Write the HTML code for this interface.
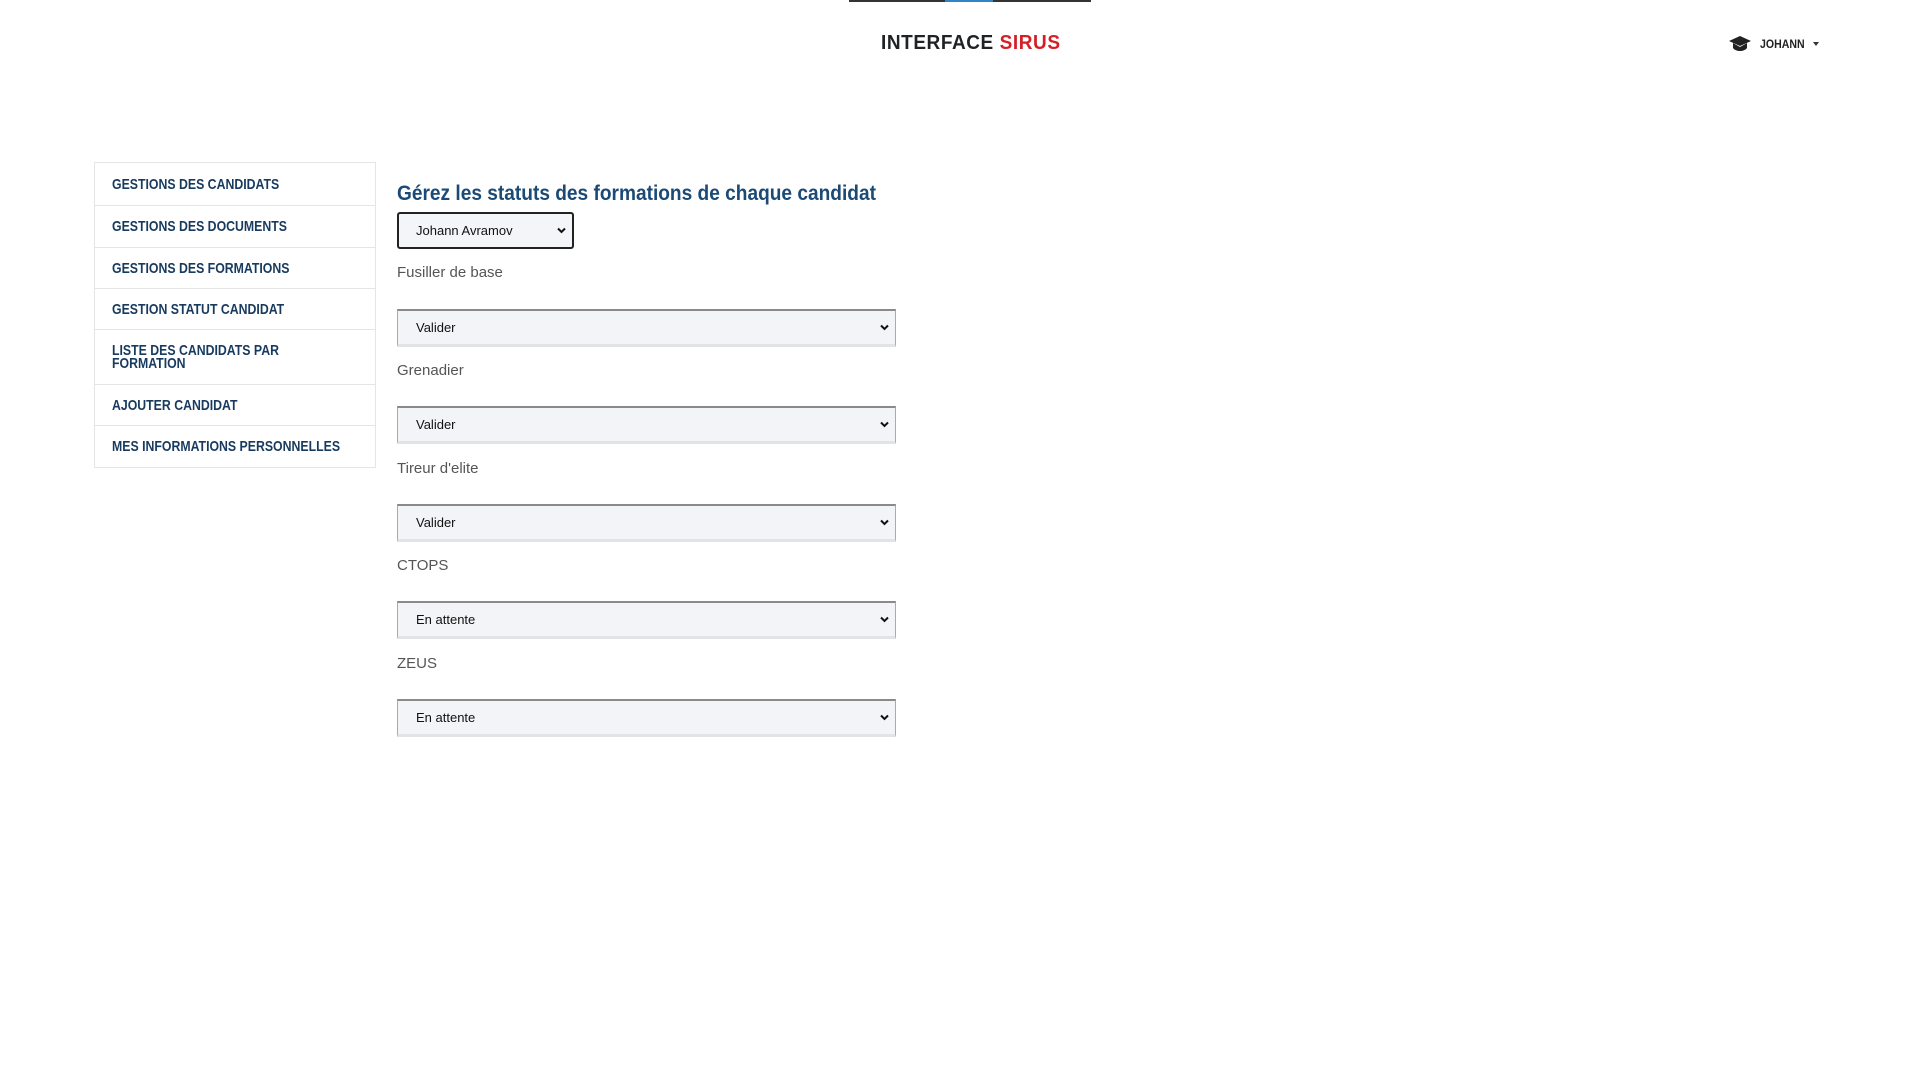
<!DOCTYPE html>
<html><head><meta charset="utf-8"><style>
*{box-sizing:border-box;margin:0;padding:0}
body{width:1920px;height:1080px;background:#fff;font-family:"Liberation Sans",sans-serif;position:relative;overflow:hidden}
.topline{position:absolute;top:0;left:849px;width:242px;height:2px;background:#333}
.topline i{position:absolute;left:96px;width:48px;height:2px;background:#2e86c8}
.logo{position:absolute;top:32px;left:881px;font-weight:bold;font-size:20px;color:#1f2326;letter-spacing:.6px;white-space:nowrap;transform:scaleX(.95);transform-origin:left}
.logo span{color:#d32027}
.user{position:absolute;top:35px;left:1728px;display:flex;align-items:center;font-weight:bold;font-size:12px;color:#222}
.user b{margin-left:8px;display:inline-block;transform:scaleX(.88);transform-origin:left}
.car{width:0;height:0;border-left:3.5px solid transparent;border-right:3.5px solid transparent;border-top:4px solid #333;margin-left:2px}
.side{position:absolute;left:94px;top:162px;width:282px;border:1px solid #e5e5e5}
.side div{border-top:1px solid #e5e5e5;padding:0 0 0 17px;display:flex;align-items:center;font-weight:bold;font-size:15px;color:#173a5e;line-height:13px}
.side div:first-child{border-top:none}
.side span{display:inline-block;transform:scaleX(.82);transform-origin:left;white-space:nowrap}
h1{position:absolute;left:397px;top:182px;font-size:21px;color:#1b4a76;white-space:nowrap;transform:scaleX(.91);transform-origin:left}
.sel1{position:absolute;left:397px;top:212px;width:177px;height:37px;border:2px solid #222;border-radius:3px;background:#f4f5f8;font-size:13px;padding-left:17px;line-height:33px;color:#111}
.lab{position:absolute;left:397px;font-size:15px;color:#555}
.sel{position:absolute;left:397px;width:499px;height:38px;background:#f3f4f7;border-top:2px solid #8a8a8a;border-left:1px solid #aaa;border-right:1px solid #aaa;border-bottom:3px solid #e2e3e6;font-size:13px;padding-left:18px;line-height:33px;color:#111}
.chev{position:absolute;right:6px;top:13px}
</style></head><body>
<div class="topline"><i></i></div>
<div class="logo">INTERFACE <span>SIRUS</span></div>
<div class="user"><svg width="24" height="18" viewBox="0 0 24 18"><path d="M12 1 L23 6 L12 11 L1 6 Z" fill="#222"/><path d="M5 8 V13 C8 17 16 17 19 13 V8 L12 12 Z" fill="#222"/></svg><b>JOHANN</b><span class="car"></span></div>
<div class="side">
<div style="height:42px"><span>GESTIONS DES CANDIDATS</span></div>
<div style="height:42px"><span>GESTIONS DES DOCUMENTS</span></div>
<div style="height:41px"><span>GESTIONS DES FORMATIONS</span></div>
<div style="height:41px"><span>GESTION STATUT CANDIDAT</span></div>
<div style="height:55px"><span>LISTE DES CANDIDATS PAR<br>FORMATION</span></div>
<div style="height:41px"><span>AJOUTER CANDIDAT</span></div>
<div style="height:42px"><span>MES INFORMATIONS PERSONNELLES</span></div>
</div>
<h1>Gérez les statuts des formations de chaque candidat</h1>
<div class="sel1">Johann Avramov<svg class="chev" style="top:13px" width="9" height="7" viewBox="0 0 9 7"><path d="M1 1.5 L4.5 5 L8 1.5" stroke="#111" stroke-width="2" fill="none"/></svg></div>
<div class="lab" style="top:264px">Fusiller de base</div>
<div class="sel" style="top:309px">Valider<svg class="chev" width="9" height="7" viewBox="0 0 9 7"><path d="M1 1.5 L4.5 5 L8 1.5" stroke="#111" stroke-width="2" fill="none"/></svg></div>
<div class="lab" style="top:362px">Grenadier</div>
<div class="sel" style="top:406px">Valider<svg class="chev" width="9" height="7" viewBox="0 0 9 7"><path d="M1 1.5 L4.5 5 L8 1.5" stroke="#111" stroke-width="2" fill="none"/></svg></div>
<div class="lab" style="top:460px">Tireur d'elite</div>
<div class="sel" style="top:504px">Valider<svg class="chev" width="9" height="7" viewBox="0 0 9 7"><path d="M1 1.5 L4.5 5 L8 1.5" stroke="#111" stroke-width="2" fill="none"/></svg></div>
<div class="lab" style="top:557px">CTOPS</div>
<div class="sel" style="top:601px">En attente<svg class="chev" width="9" height="7" viewBox="0 0 9 7"><path d="M1 1.5 L4.5 5 L8 1.5" stroke="#111" stroke-width="2" fill="none"/></svg></div>
<div class="lab" style="top:655px">ZEUS</div>
<div class="sel" style="top:699px">En attente<svg class="chev" width="9" height="7" viewBox="0 0 9 7"><path d="M1 1.5 L4.5 5 L8 1.5" stroke="#111" stroke-width="2" fill="none"/></svg></div>
</body></html>
